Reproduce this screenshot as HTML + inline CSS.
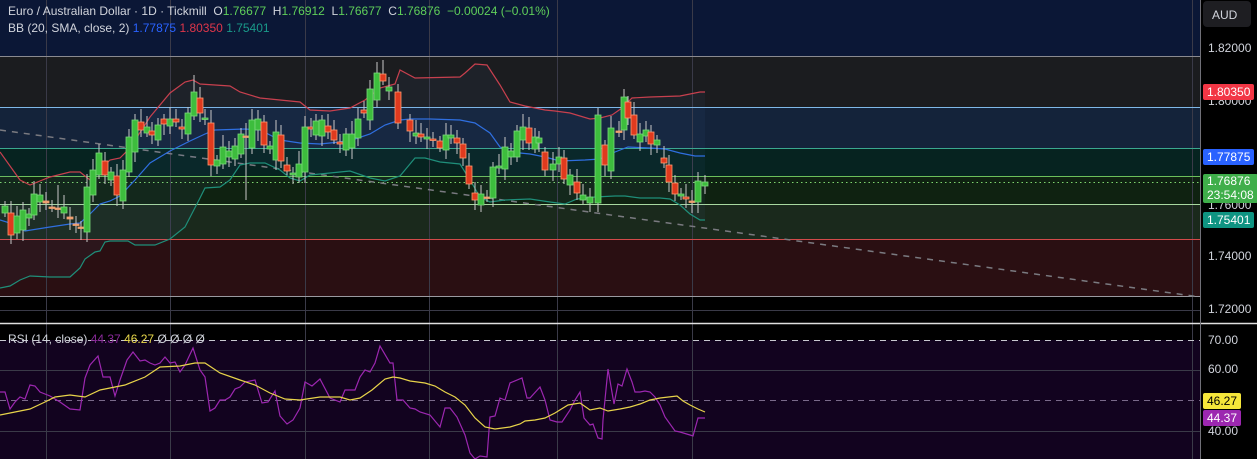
<!DOCTYPE html>
<html><head><meta charset="utf-8">
<style>
html,body{margin:0;padding:0;background:#000;}
body{width:1257px;height:459px;overflow:hidden;position:relative;font-family:"Liberation Sans",sans-serif;}
svg{position:absolute;left:0;top:0;}
.t{position:absolute;font-size:12px;color:#d1d4dc;white-space:nowrap;}
.lab{position:absolute;left:1203px;font-size:12px;color:#fff;padding:0 4px;border-radius:2px;line-height:16px;}
.ax{position:absolute;left:1208px;font-size:12px;color:#d1d4dc;}
</style></head><body>
<svg id="s" width="1257" height="459" xmlns="http://www.w3.org/2000/svg">
<rect x="0" y="0" width="1200" height="56" fill="#0b1736"/>
<rect x="0" y="56" width="1200" height="51" fill="#1b1c1f"/>
<rect x="0" y="107" width="1200" height="41" fill="#14233a"/>
<rect x="0" y="148" width="1200" height="28" fill="#062320"/>
<rect x="0" y="176" width="1200" height="28" fill="#0f2211"/>
<rect x="0" y="204" width="1200" height="35" fill="#1a291c"/>
<rect x="0" y="239" width="1200" height="57" fill="#2a0f12"/>
<rect x="0" y="296" width="1200" height="27" fill="#000"/>
<rect x="0" y="340" width="1200" height="119" fill="#12031f"/>
<g stroke="#3a3a48" stroke-width="1">
<line x1="46.5" y1="0" x2="46.5" y2="459"/><line x1="170.5" y1="0" x2="170.5" y2="459"/><line x1="305.5" y1="0" x2="305.5" y2="459"/><line x1="429.5" y1="0" x2="429.5" y2="459"/><line x1="557.5" y1="0" x2="557.5" y2="459"/><line x1="692.5" y1="0" x2="692.5" y2="459"/><line x1="1192.5" y1="0" x2="1192.5" y2="459"/>
<line x1="0" y1="310.5" x2="1200" y2="310.5"/><line x1="0" y1="370.5" x2="1200" y2="370.5"/><line x1="0" y1="431.5" x2="1200" y2="431.5"/>
</g>
<line x1="0" y1="56.5" x2="1200" y2="56.5" stroke="#8a8a90"/>
<line x1="0" y1="107.5" x2="1200" y2="107.5" stroke="#7fb8e8"/>
<line x1="0" y1="148.5" x2="1200" y2="148.5" stroke="#3aa88e"/>
<line x1="0" y1="176.5" x2="1200" y2="176.5" stroke="#6cbf5a"/>
<line x1="0" y1="182.5" x2="1200" y2="182.5" stroke="#7ed66e" stroke-dasharray="1.5,3"/>
<line x1="0" y1="204.5" x2="1200" y2="204.5" stroke="#a8d8a0"/>
<line x1="0" y1="239.5" x2="1200" y2="239.5" stroke="#d24a4a"/>
<line x1="0" y1="296.5" x2="1200" y2="296.5" stroke="#9a9aa0"/>
<line x1="0" y1="130" x2="1200" y2="297" stroke="#7a7a80" stroke-width="1.5" stroke-dasharray="6,6"/>
<line x1="0" y1="340.5" x2="1200" y2="340.5" stroke="#c8c8d0" stroke-dasharray="6,5"/>
<line x1="0" y1="400.5" x2="1200" y2="400.5" stroke="#7a6a8a" stroke-dasharray="6,5"/>
<line x1="0" y1="323.5" x2="1257" y2="323.5" stroke="#e0e0e0" stroke-width="1.5"/>
<line x1="1200.5" y1="0" x2="1200.5" y2="459" stroke="#707078"/>
<g id="bb" fill="none" stroke-width="1.2"></g>
<g id="cd"></g>
<g id="rsi" fill="none" stroke-width="1.2"></g>
<rect x="1203" y="1" width="48" height="26" rx="4" fill="#1e1e22"/>
</svg>
<div class="t" style="left:8px;top:4px;">Euro / Australian Dollar · 1D · Tickmill &nbsp;O<span style="color:#5fcf5a">1.76677</span> &nbsp;H<span style="color:#5fcf5a">1.76912</span> &nbsp;L<span style="color:#5fcf5a">1.76677</span> &nbsp;C<span style="color:#5fcf5a">1.76876</span> &nbsp;<span style="color:#5fcf5a">−0.00024 (−0.01%)</span></div>
<div class="t" style="left:8px;top:21px;">BB (20, SMA, close, 2) <span style="color:#2962ff">1.77875</span> <span style="color:#e0364a">1.80350</span> <span style="color:#1a9a8a">1.75401</span></div>
<div class="t" style="left:8px;top:332px;">RSI (14, close) <span style="color:#8a2a9a">44.37</span> <span style="color:#e8d84a">46.27</span> Ø Ø Ø Ø</div>
<div class="ax" style="left:1212px;top:8px;">AUD</div>
<div class="ax" style="top:41px;">1.82000</div>
<div class="ax" style="top:94px;">1.80000</div>
<div class="lab" style="top:84px;background:#f23645;">1.80350</div>
<div class="lab" style="top:149px;background:#2962ff;">1.77875</div>
<div class="ax" style="top:198px;">1.76000</div>
<div class="lab" style="top:174px;background:#3fae4a;line-height:14px;padding-bottom:1px;">1.76876<br>23:54:08</div>
<div class="lab" style="top:212px;background:#0f9482;">1.75401</div>
<div class="ax" style="top:249px;">1.74000</div>
<div class="ax" style="top:302px;">1.72000</div>
<div class="ax" style="top:333px;">70.00</div>
<div class="ax" style="top:362px;">60.00</div>
<div class="ax" style="top:424px;">40.00</div>
<div class="lab" style="top:393px;background:#f5e63a;color:#000;">46.27</div>
<div class="lab" style="top:410px;background:#9c27b0;">44.37</div>
<script>
var NS="http://www.w3.org/2000/svg";
function pl(g,pts,col){var p=document.createElementNS(NS,"polyline");p.setAttribute("points",pts.map(function(a){return a.join(",")}).join(" "));p.setAttribute("stroke",col);document.getElementById(g).appendChild(p);}
var up=[[0,152],[20,180],[30,185],[50,177],[70,172],[80,172],[90,180],[97,173],[110,160],[120,158],[130,148],[150,117],[170,93],[185,82],[193,80],[200,84],[230,86],[240,92],[260,98],[300,102],[310,110],[330,111],[350,108],[365,100],[380,88],[395,84],[400,70],[415,78],[460,77],[465,73],[475,64],[487,65],[500,85],[510,102],[525,106],[545,110],[555,111],[570,113],[590,119],[600,118],[612,115],[622,108],[632,98],[650,97],[680,96],[700,92],[705,92]];
var mid=[[0,220],[10,223],[25,231],[50,227],[70,224],[80,223],[90,214],[100,204],[110,201],[120,196],[135,180],[150,163],[170,151],[190,141],[205,134],[215,130],[245,129],[260,130],[280,140],[300,143],[320,144],[340,142],[355,139],[370,134],[385,125],[400,120],[410,119],[430,119],[460,120],[475,123],[490,133],[500,147],[510,152],[530,154],[545,157],[560,161],[585,160],[600,159],[615,152],[628,147],[650,148],[665,149],[680,153],[695,156],[705,156]];
var lo=[[0,288],[10,286],[20,280],[30,276],[50,277],[70,277],[80,268],[85,259],[95,252],[100,251],[105,242],[110,241],[128,241],[135,245],[155,245],[170,239],[185,227],[200,198],[205,188],[220,187],[230,180],[240,165],[250,163],[265,163],[280,170],[290,178],[300,181],[310,175],[320,174],[340,172],[350,171],[370,178],[385,181],[400,176],[415,158],[425,158],[440,162],[460,164],[470,180],[480,197],[490,202],[505,200],[530,199],[550,202],[565,204],[577,199],[595,197],[615,196],[625,196],[640,198],[660,198],[670,199],[680,205],[690,214],[700,220],[705,220]];
var f=document.createElementNS(NS,"polygon");f.setAttribute("points",up.concat(lo.slice().reverse()).map(function(a){return a.join(",")}).join(" "));f.setAttribute("fill","rgba(80,140,200,0.06)");document.getElementById("bb").appendChild(f);
pl("bb",up,"#c8404e");pl("bb",mid,"#2f6fe0");pl("bb",lo,"#1f8f7a");
var C=[[5,'G',206,213],[11,'R',213,235],[17,'G',216,233],[23,'G',210,230],[29,'G',214,218],[34,'G',194,215],[40,'G',195,202],[46,'D',201,203],[52,'D',207,208],[58,'D',208,209],[64,'G',207,213],[70,'D',217,219],[76,'D',224,225],[81,'D',227,228],[87,'G',187,232],[93,'G',170,195],[99,'G',153,175],[105,'R',161,175],[111,'G',172,180],[117,'R',176,195],[123,'G',170,201],[129,'G',137,172],[135,'G',120,152],[141,'R',122,130],[147,'G',127,133],[152,'R',131,135],[158,'G',125,140],[164,'R',119,124],[170,'G',119,126],[176,'R',119,122],[182,'R',127,129],[188,'G',113,134],[194,'G',92,116],[200,'R',98,113],[205,'G',118,119],[211,'R',123,165],[217,'G',160,166],[223,'G',147,164],[229,'G',151,157],[235,'G',146,159],[241,'G',134,154],[246,'D',136,137],[252,'G',120,148],[258,'G',119,130],[264,'R',122,145],[270,'G',146,149],[276,'G',132,160],[281,'R',135,161],[287,'R',165,171],[293,'G',173,175],[299,'G',164,177],[305,'G',127,172],[311,'R',127,129],[316,'G',121,135],[322,'G',120,136],[328,'R',126,132],[334,'R',130,140],[340,'R',142,144],[346,'G',134,150],[352,'G',134,148],[358,'G',119,138],[364,'R',110,113],[370,'G',89,120],[377,'G',73,100],[383,'R',74,81],[389,'G',87,91],[398,'R',92,123],[410,'R',120,131],[416,'G',133,136],[421,'R',134,137],[427,'G',137,139],[433,'R',139,140],[440,'R',141,148],[446,'G',135,150],[451,'G',135,138],[457,'R',138,143],[463,'R',144,158],[469,'R',166,184],[475,'R',193,200],[481,'G',194,205],[487,'D',197,198],[493,'G',167,198],[499,'G',166,168],[505,'G',147,169],[511,'G',151,157],[517,'G',131,157],[523,'G',127,140],[529,'R',128,143],[535,'G',137,149],[539,'G',138,143],[545,'R',152,170],[553,'G',164,170],[559,'G',157,164],[564,'R',158,179],[570,'G',175,185],[577,'R',182,193],[583,'G',195,200],[590,'G',197,203],[598,'G',115,203],[605,'R',145,165],[611,'G',128,171],[619,'D',131,132],[624,'G',97,130],[628,'R',102,118],[634,'R',115,135],[640,'G',134,142],[646,'G',130,136],[651,'R',132,144],[657,'G',140,145],[664,'R',158,163],[669,'R',165,182],[675,'R',183,194],[681,'G',194,196],[686,'R',197,199],[692,'D',201,202],[698,'G',181,202],[705,'G',182,186]];
var W={383:60,194:75,625:58,598:212,692:213,377:62,370:80,600:113,211:110,246:200,81:240,52:200,58:185,105:152};
var g=document.getElementById("cd"),s="";
C.forEach(function(c,i){var x=c[0],t=c[2],b=c[3];var h1=t-5-(i*7%9),h2=b+4+(i*5%8);if(W[x]){if(W[x]<t)h1=W[x];else h2=W[x];}
var fc=c[1]=='G'?'#3dbd3d':c[1]=='R'?'#e03a1e':'#f0a070';var sc=c[1]=='G'?'#7ad87a':c[1]=='R'?'#ff9a70':'#f0a070';
s+='<line x1="'+x+'" y1="'+h1+'" x2="'+x+'" y2="'+h2+'" stroke="#c8c8c8" stroke-width="1"/>';
s+='<rect x="'+(x-3)+'" y="'+t+'" width="6" height="'+Math.max(1.5,b-t)+'" fill="'+fc+'" stroke="'+sc+'" stroke-width="0.8"/>';});
g.innerHTML=s;
var rp=[[0,392],[5,392],[10,409],[15,402],[20,397],[25,399],[30,385],[35,386],[40,392],[50,396],[60,402],[70,409],[80,410],[85,378],[90,365],[98,356],[103,377],[110,377],[115,396],[120,380],[127,360],[133,352],[140,361],[145,360],[150,363],[155,365],[160,363],[165,357],[170,363],[175,362],[180,372],[185,365],[193,348],[200,370],[205,377],[210,411],[215,408],[220,400],[225,400],[230,397],[235,389],[240,387],[245,382],[255,380],[262,403],[268,402],[275,391],[280,416],[287,424],[293,420],[300,408],[305,382],[312,386],[320,379],[330,398],[340,402],[345,390],[355,390],[360,377],[365,370],[370,372],[375,363],[380,346],[390,363],[393,363],[397,400],[403,400],[410,408],[415,409],[420,412],[430,415],[440,427],[445,408],[450,408],[457,417],[465,435],[470,453],[475,459],[480,456],[487,457],[490,417],[495,416],[500,398],[505,400],[510,383],[522,378],[527,398],[530,398],[540,387],[545,400],[550,420],[557,422],[562,422],[570,410],[575,400],[580,392],[584,418],[590,425],[593,424],[598,438],[602,439],[603,420],[608,369],[614,404],[618,384],[622,386],[627,369],[632,382],[635,392],[640,392],[645,391],[650,392],[655,397],[660,405],[665,417],[675,431],[680,432],[690,435],[693,436],[698,418],[705,418]];
var ry=[[0,415],[15,412],[30,409],[45,402],[55,397],[70,395],[85,397],[100,390],[115,387],[125,385],[145,377],[160,367],[180,366],[195,363],[205,363],[220,373],[240,380],[255,385],[270,393],[285,399],[300,400],[320,397],[340,397],[350,400],[360,398],[372,390],[385,379],[393,377],[400,378],[410,381],[425,383],[435,386],[445,392],[455,397],[465,405],[475,418],[485,427],[495,429],[510,427],[520,424],[525,421],[535,420],[545,418],[555,413],[568,405],[580,403],[590,410],[600,408],[608,411],[620,409],[630,407],[640,404],[650,400],[660,398],[677,396],[683,401],[690,405],[698,409],[705,412]];
pl("rsi",rp,"#9c27b0");pl("rsi",ry,"#e8d44a");
</script>
</body></html>
